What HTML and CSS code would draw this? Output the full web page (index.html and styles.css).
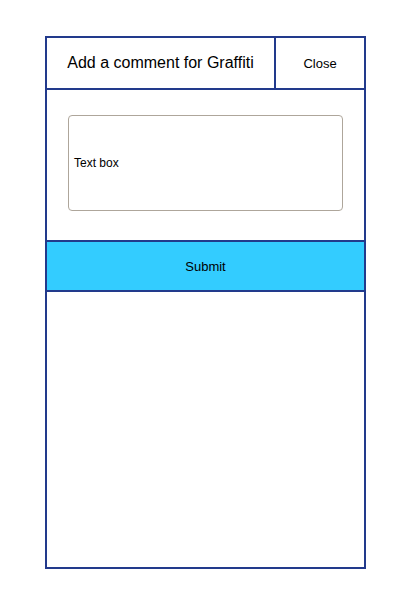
FILE: index.html
```html
<!DOCTYPE html>
<html>
<head>
<meta charset="utf-8">
<link rel="stylesheet" href="styles.css">
</head>
<body>
<div class="frame">
  <div class="header">
    <div class="title">Add a comment for Graffiti</div>
    <div class="close">Close</div>
  </div>
  <div class="content">
    <div class="textbox">Text box</div>
  </div>
  <div class="submit">Submit</div>
</div>
</body>
</html>
```
FILE: styles.css
```css
html, body {
  margin: 0;
  padding: 0;
  background: #ffffff;
}
body {
  font-family: "Liberation Sans", Arial, sans-serif;
  color: #000;
}
.frame {
  box-sizing: border-box;
  margin: 36px 0 0 45px;
  width: 321px;
  height: 533px;
  border: 2px solid #223a8c;
  display: flex;
  flex-direction: column;
}
.header {
  display: flex;
  height: 52px;
  box-sizing: border-box;
  border-bottom: 2px solid #223a8c;
}
.title {
  box-sizing: border-box;
  width: 229px;
  border-right: 2px solid #223a8c;
  display: flex;
  align-items: center;
  justify-content: center;
  font-size: 16px;
}
.close {
  flex: 1;
  display: flex;
  align-items: center;
  justify-content: center;
  font-size: 13px;
}
.content {
  padding: 25px 21px 29px 21px;
}
.textbox {
  box-sizing: border-box;
  height: 96px;
  border: 1.5px solid #aea69b;
  border-radius: 4px;
  display: flex;
  align-items: center;
  padding-left: 5px;
  font-size: 12px;
}
.submit {
  box-sizing: border-box;
  height: 52px;
  margin: 0 -2px;
  background: #33ccff;
  border: 2px solid #223a8c;
  display: flex;
  align-items: center;
  justify-content: center;
  font-size: 13px;
}
```
